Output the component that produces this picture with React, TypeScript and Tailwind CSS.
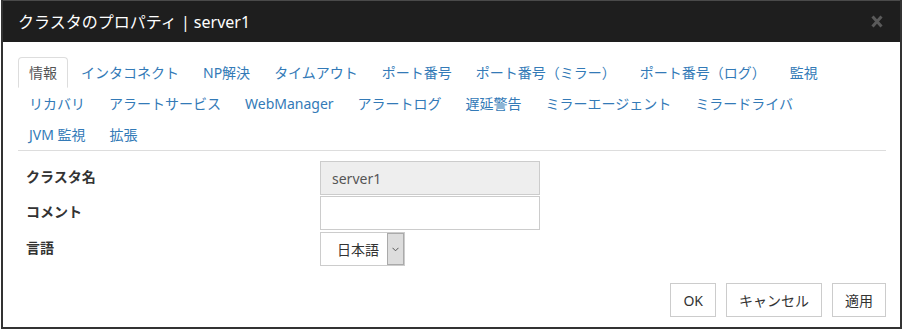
import React from "react";

const tabs = [
  "情報",
  "インタコネクト",
  "NP解決",
  "タイムアウト",
  "ポート番号",
  "ポート番号（ミラー）",
  "ポート番号（ログ）",
  "監視",
  "リカバリ",
  "アラートサービス",
  "WebManager",
  "アラートログ",
  "遅延警告",
  "ミラーエージェント",
  "ミラードライバ",
  "JVM 監視",
  "拡張",
];

const font = {
  fontFamily: '"Noto Sans", "Noto Sans CJK JP", sans-serif',
};

export default function App() {
  return (
    <div className="w-[904px] h-[331px] bg-white" style={font}>
      <div className="ml-[1px] w-[901px] border-x-2 border-b-2 border-[#333]">
        {/* Title bar */}
        <div className="flex h-[42px] items-center justify-between bg-[#1e1e1e] border-t border-[#4a4a4a] pl-[15px] pr-[17px]">
          <span className="text-[16px] leading-[20px] text-white">
            クラスタのプロパティ | server1
          </span>
          <svg width="12" height="13" viewBox="0 0 12 13">
            <path
              d="M1.5 1.5 L10.5 11.5 M10.5 1.5 L1.5 11.5"
              stroke="#5a5a5a"
              strokeWidth="3"
              strokeLinecap="butt"
            />
          </svg>
        </div>

        <div className="pl-[15px] pr-[14px] pt-[15px] pb-[10px]">
          {/* Tabs */}
          <ul className="flex flex-wrap border-b border-[#ddd]">
            {tabs.map((t, i) => (
              <li
                key={t}
                className={
                  i === 0
                    ? "mr-[2px] rounded-t-[4px] border border-[#ddd] border-b-transparent px-[10px] py-[4px] text-[14px] leading-[21px] text-[#555]"
                    : "mr-[2px] border border-transparent px-[10px] py-[4px] text-[14px] leading-[21px] text-[#337ab7]"
                }
              >
                {t}
              </li>
            ))}
          </ul>

          {/* Form */}
          <div className="mt-[10px] flex flex-col pl-[8px]">
            <div className="flex items-center">
              <div className="w-[294px] pb-[3px] text-[14px] font-bold text-[#333]">クラスタ名</div>
              <div className="flex h-[34px] w-[220px] items-center border border-[#ccc] bg-[#eee] px-[11px] text-[14px] text-[#555]">
                server1
              </div>
            </div>
            <div className="mt-[1px] flex items-center">
              <div className="w-[294px] pb-[3px] text-[14px] font-bold text-[#333]">コメント</div>
              <div className="h-[34px] w-[220px] border border-[#ccc] bg-white" />
            </div>
            <div className="mt-[2px] flex items-center">
              <div className="w-[294px] pb-[3px] text-[14px] font-bold text-[#333]">言語</div>
              <div className="flex h-[34px] items-stretch border border-[#ccc] bg-white">
                <div className="flex w-[66px] items-center pl-[16px] text-[14px] text-[#333]">
                  日本語
                </div>
                <div className="flex w-[17px] items-center justify-center border border-[#aaa] bg-[#ddd]">
                  <svg width="7" height="5" viewBox="0 0 7 5">
                    <path d="M0.5 0.8 L3.5 3.8 L6.5 0.8" fill="none" stroke="#555" strokeWidth="1" />
                  </svg>
                </div>
              </div>
            </div>
          </div>

          {/* Buttons */}
          <div className="mt-[17px] flex justify-end gap-[10px]">
            <button className="h-[34px] border border-[#ccc] bg-white px-[12px] text-[14px] text-[#333]">
              OK
            </button>
            <button className="h-[34px] border border-[#ccc] bg-white px-[12px] text-[14px] text-[#333]">
              キャンセル
            </button>
            <button className="h-[34px] border border-[#ccc] bg-white px-[12px] text-[14px] text-[#333]">
              適用
            </button>
          </div>
        </div>
      </div>
    </div>
  );
}
